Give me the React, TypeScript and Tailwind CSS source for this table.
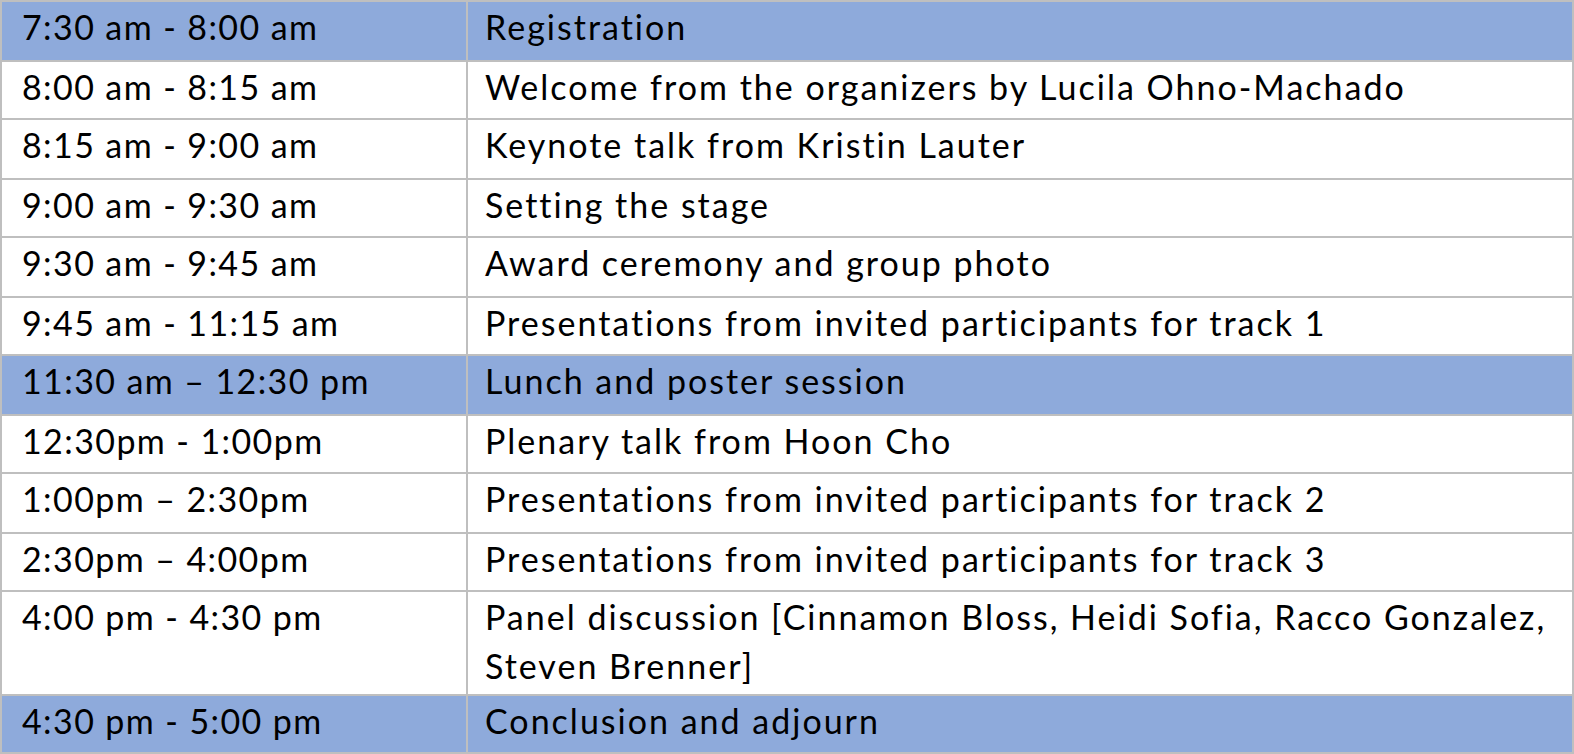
const rows = [
  { time: '7:30 am - 8:00 am', what: 'Registration', hi: true, h: 'h-[58px]' },
  { time: '8:00 am - 8:15 am', what: 'Welcome from the organizers by Lucila Ohno-Machado', hi: false, h: 'h-[58px]' },
  { time: '8:15 am - 9:00 am', what: 'Keynote talk from Kristin Lauter', hi: false, h: 'h-[60px]' },
  { time: '9:00 am - 9:30 am', what: 'Setting the stage', hi: false, h: 'h-[58px]' },
  { time: '9:30 am - 9:45 am', what: 'Award ceremony and group photo', hi: false, h: 'h-[60px]' },
  { time: '9:45 am - 11:15 am', what: 'Presentations from invited participants for track 1', hi: false, h: 'h-[58px]' },
  { time: '11:30 am \u2013 12:30 pm', what: 'Lunch and poster session', hi: true, h: 'h-[60px]' },
  { time: '12:30pm - 1:00pm', what: 'Plenary talk from Hoon Cho', hi: false, h: 'h-[58px]' },
  { time: '1:00pm \u2013 2:30pm', what: 'Presentations from invited participants for track 2', hi: false, h: 'h-[60px]' },
  { time: '2:30pm \u2013 4:00pm', what: 'Presentations from invited participants for track 3', hi: false, h: 'h-[58px]' },
  {
    time: '4:00 pm - 4:30 pm',
    what: 'Panel discussion [Cinnamon Bloss, Heidi Sofia, Racco Gonzalez, Steven Brenner]',
    hi: false,
    h: 'h-[104px]',
  },
  { time: '4:30 pm - 5:00 pm', what: 'Conclusion and adjourn', hi: true, h: 'h-[58px]' },
]

export default function App() {
  return (
    <div className="w-[1574px] h-[754px] bg-white text-black font-['Lato',sans-serif] text-[34px] leading-[49px]">
      <div className="border-2 border-[#bfbfbf]">
        {rows.map((row, i) => (
          <div
            key={i}
            className={`flex ${row.h} ${i > 0 ? 'border-t-2 border-[#bfbfbf]' : ''} ${row.hi ? 'bg-[#8eaadb]' : ''}`}
          >
            <div className="w-[466px] shrink-0 border-r-2 border-[#bfbfbf] pl-[20px] whitespace-nowrap tracking-[1.4px]">
              {row.time}
            </div>
            <div className="flex-1 pl-[17px] pr-[8px] tracking-[2px]">{row.what}</div>
          </div>
        ))}
      </div>
    </div>
  )
}
